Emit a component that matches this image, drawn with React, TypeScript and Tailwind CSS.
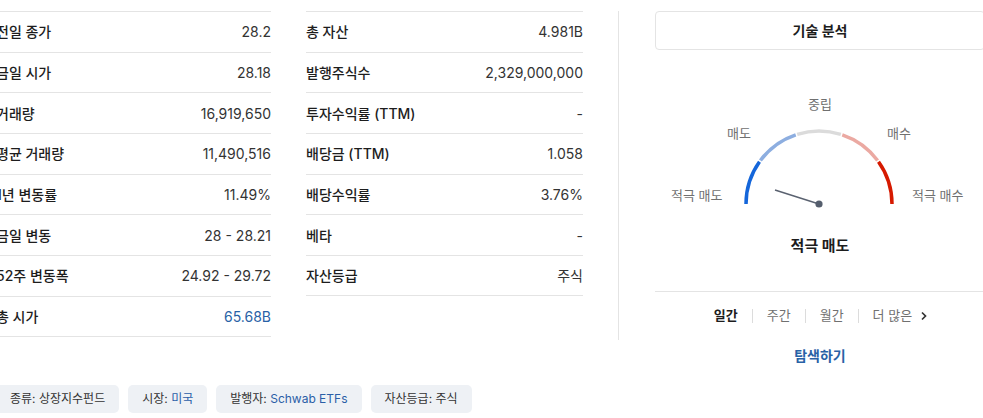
import React from "react";

const FONT = { fontFamily: '"Inter", "Noto Sans CJK KR", sans-serif' };

type Row = { label: string; value: string; blue?: boolean };

const leftRows: Row[] = [
  { label: "전일 종가", value: "28.2" },
  { label: "금일 시가", value: "28.18" },
  { label: "거래량", value: "16,919,650" },
  { label: "평균 거래량", value: "11,490,516" },
  { label: "1년 변동률", value: "11.49%" },
  { label: "금일 변동", value: "28 - 28.21" },
  { label: "52주 변동폭", value: "24.92 - 29.72" },
  { label: "총 시가", value: "65.68B", blue: true },
];

const midRows: Row[] = [
  { label: "총 자산", value: "4.981B" },
  { label: "발행주식수", value: "2,329,000,000" },
  { label: "투자수익률 (TTM)", value: "-" },
  { label: "배당금 (TTM)", value: "1.058" },
  { label: "배당수익률", value: "3.76%" },
  { label: "베타", value: "-" },
  { label: "자산등급", value: "주식" },
];

function StatTable({ rows, className }: { rows: Row[]; className?: string }) {
  return (
    <div className={className}>
      {rows.map((r) => (
        <div
          key={r.label}
          className="flex items-center justify-between h-[40.7px] border-t border-[#e4e4e4] last:border-b text-[14px]"
        >
          <span className="font-medium text-[#1d1d1d]">{r.label}</span>
          <span className={r.blue ? "text-[#2962a6]" : "text-[#333]"}>{r.value}</span>
        </div>
      ))}
    </div>
  );
}

// gauge drawing
const CX = 80;
const CY = 78;
const R = 73;
function pt(deg: number) {
  const a = (deg * Math.PI) / 180;
  return `${CX + R * Math.cos(a)} ${CY - R * Math.sin(a)}`;
}
const segments = [
  { from: 180, to: 144.6, color: "#1466da" },
  { from: 143.4, to: 108.6, color: "#8daee0" },
  { from: 107.4, to: 72.6, color: "#dbdbdb" },
  { from: 71.4, to: 36.6, color: "#eba9a2" },
  { from: 35.4, to: 0, color: "#d61a00" },
];

function Gauge() {
  return (
    <svg width="160" height="82" viewBox="0 0 160 82" className="absolute left-[84px] top-[76px]">
      {segments.map((s) => (
        <path
          key={s.from}
          d={`M ${pt(s.from)} A ${R} ${R} 0 0 1 ${pt(s.to)}`}
          fill="none"
          stroke={s.color}
          strokeWidth="3.5"
        />
      ))}
      <line x1={CX} y1={CY} x2={36} y2={64} stroke="#5a6270" strokeWidth="1.4" />
      <circle cx={CX} cy={CY} r="3.6" fill="#555e6d" />
    </svg>
  );
}

function Chip({ label, value, blue }: { label: string; value: string; blue?: boolean }) {
  return (
    <div className="flex items-center h-[28px] px-[14px] rounded-[5px] bg-[#eef1f5] text-[12px] text-[#333]">
      {label}:&nbsp;<span className={blue ? "text-[#2b5ea7]" : ""}>{value}</span>
    </div>
  );
}

export default function App() {
  return (
    <div className="w-[983px] h-[418px] overflow-hidden bg-white" style={FONT}>
      <div className="-ml-[4px] pt-[11px]">
        <div className="flex items-start">
          <StatTable rows={leftRows} className="w-[275px] shrink-0" />
          <StatTable rows={midRows} className="w-[277px] ml-[35px] shrink-0" />

          <div className="ml-[35px] flex flex-col shrink-0">
            <div className="border-l border-[#e4e4e4] h-[329px] pl-[36px]">
              <div className="w-[330px]">
                <div className="h-[39px] border border-[#e4e4e4] rounded-[4px] flex items-center justify-center text-[14px] font-bold text-[#1d1d1d]">
                  기술 분석
                </div>

                <div className="relative h-[170px] text-[13px] text-[#707070]">
                  <span className="absolute left-1/2 -translate-x-1/2 top-[45px]">중립</span>
                  <span className="absolute left-[72px] top-[74px]">매도</span>
                  <span className="absolute left-[232px] top-[74px]">매수</span>
                  <span className="absolute left-[16px] top-[136px]">적극 매도</span>
                  <span className="absolute left-[257px] top-[136px]">적극 매수</span>
                  <Gauge />
                </div>

                <div className="h-[72px] pt-[16px] border-b border-[#e4e4e4] text-center text-[15px] leading-[20px] font-bold text-[#1d1d1d]">
                  적극 매도
                </div>

                <div className="h-[48px] flex items-center justify-center gap-[14px] text-[13px] text-[#707070] pl-[2px]">
                  <span className="font-bold text-[#1d1d1d]">일간</span>
                  <span className="w-px h-[14px] bg-[#dcdcdc]" />
                  <span>주간</span>
                  <span className="w-px h-[14px] bg-[#dcdcdc]" />
                  <span>월간</span>
                  <span className="w-px h-[14px] bg-[#dcdcdc]" />
                  <span className="flex items-center gap-[8px]">
                    더 많은
                    <svg width="8" height="10" viewBox="0 0 8 10">
                      <path d="M2 1.5 L5.5 5 L2 8.5" fill="none" stroke="#333" strokeWidth="1.7" />
                    </svg>
                  </span>
                </div>
              </div>
            </div>
            <div className="pl-[37px] mt-[6px]">
              <div className="w-[330px] text-center text-[14px] leading-[20px] font-bold text-[#2962a6]">
                탐색하기
              </div>
            </div>
          </div>
        </div>

        <div className="flex gap-[9px] mt-[19px]">
          <Chip label="종류" value="상장지수펀드" />
          <Chip label="시장" value="미국" blue />
          <Chip label="발행자" value="Schwab ETFs" blue />
          <Chip label="자산등급" value="주식" />
        </div>
      </div>
    </div>
  );
}
